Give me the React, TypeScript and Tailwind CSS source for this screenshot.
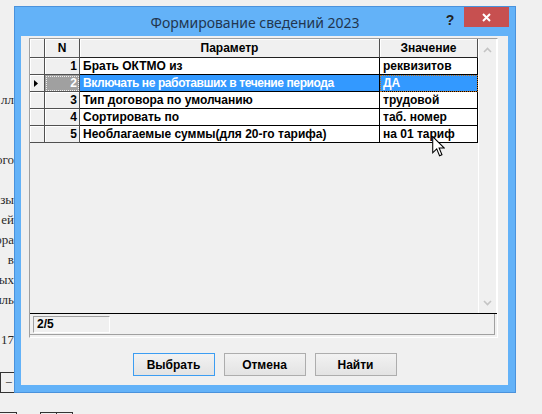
import React from "react";

const ROWS = [
  { n: 1, param: "Брать ОКТМО из", value: "реквизитов" },
  { n: 2, param: "Включать не работавших в течение периода", value: "ДА" },
  { n: 3, param: "Тип договора по умолчанию", value: "трудовой" },
  { n: 4, param: "Сортировать по", value: "таб. номер" },
  { n: 5, param: "Необлагаемые суммы(для 20-го тарифа)", value: "на 01 тариф" },
];

const SELECTED = 2;

// text fragments of the document behind the dialog, cut by the window edge
const BEHIND = ["лл", "", "", "ого", "", "азы", "ей ", "ора", "в ", "ных", "иль", "", "17"];

const fixedCell =
  "shrink-0 bg-[#f0f0f0] border-r border-b border-[#505050] shadow-[inset_1px_1px_0_#ffffff]";

function Chevron({ up }: { up?: boolean }) {
  return (
    <svg width="9" height="6" viewBox="0 0 9 6" aria-hidden="true">
      <polyline
        points={up ? "1,5 4.5,1.5 8,5" : "1,1 4.5,4.5 8,1"}
        fill="none"
        stroke="#c4c4c4"
        strokeWidth="1.6"
      />
    </svg>
  );
}

function Grid() {
  return (
    <div className="ml-[8px] mt-[2px] w-[469px] h-[300px] border-t border-l border-[#a0a0a0] border-r border-b border-r-white border-b-white flex flex-col">
      <div className="flex h-[274px]">
        <div className="w-[448px] flex flex-col">
          {/* header */}
          <div className="flex h-[19px] font-bold">
            <div className={`${fixedCell} w-[15px]`} />
            <div className={`${fixedCell} w-[35px] flex items-center justify-center`}>N</div>
            <div className={`${fixedCell} w-[300px] flex items-center justify-center border-b-[#202020]`}>
              Параметр
            </div>
            <div className={`${fixedCell} w-[98px] flex items-center justify-center border-b-[#202020]`}>
              Значение
            </div>
          </div>
          {ROWS.map((r) => {
            const sel = r.n === SELECTED;
            return (
              <div key={r.n} className="flex h-[17px] font-bold">
                <div className={`${fixedCell} w-[15px] flex items-center pl-[4px]`}>
                  {sel && (
                    <svg width="4" height="7" viewBox="0 0 4 7" aria-hidden="true">
                      <polygon points="0,0 4,3.5 0,7" fill="#000" />
                    </svg>
                  )}
                </div>
                <div
                  className={
                    sel
                      ? "shrink-0 w-[35px] bg-[#a0a0a0] text-white border-r border-b border-[#505050] outline-1 outline-dotted outline-[#f0f0f0] -outline-offset-2 flex items-center justify-end pr-[2px]"
                      : `${fixedCell} w-[35px] flex items-center justify-end pr-[2px]`
                  }
                >
                  {r.n}
                </div>
                <div
                  className={[
                    "shrink-0 w-[300px] border-r border-b border-black flex items-center pl-[3px] whitespace-nowrap",
                    sel ? "bg-[#3399ff] text-white tracking-[-0.4px]" : "bg-white text-black",
                  ].join(" ")}
                >
                  {r.param}
                </div>
                <div
                  className={[
                    "shrink-0 w-[98px] border-r border-b border-black flex items-center pl-[3px] whitespace-nowrap",
                    sel
                      ? "bg-[#3399ff] text-white outline-1 outline-dotted outline-[#c07020] -outline-offset-1"
                      : "bg-white text-black",
                  ].join(" ")}
                >
                  {r.value}
                </div>
              </div>
            );
          })}
          <div className="flex-1 bg-[#f0f0f0]" />
        </div>
        {/* scrollbar */}
        <div className="w-[19px] bg-[#f0f0f0] border-l border-r border-white flex flex-col items-center justify-between pt-[8px] pb-[7px]">
          <Chevron up />
          <Chevron />
        </div>
      </div>
      <div className="h-[1px] bg-black" />
      <div className="h-[23px]">
        <div className="w-[465px] h-[21px] border-r border-b border-[#a0a0a0] pl-[3px] pt-[2px]">
          <div className="w-[77px] h-[17px] border-t border-l border-[#a0a0a0] border-r border-b border-r-white border-b-white font-bold pl-[3px] leading-[15px]">
            2/5
          </div>
        </div>
      </div>
    </div>
  );
}

function Button({ label, primary }: { label: string; primary?: boolean }) {
  return (
    <div
      className={[
        "w-[82px] h-[23px] flex items-center justify-center font-bold bg-gradient-to-b from-[#f2f2f2] to-[#e3e3e3] border",
        primary ? "border-[#3c9df2]" : "border-[#adadad]",
      ].join(" ")}
    >
      {label}
    </div>
  );
}

function Dialog() {
  return (
    <div className="mt-[6px] w-[502px] h-[387px] border border-[#4a92dc] bg-[#63b2f8] flex flex-col">
      <div className="h-[29px] flex items-start shrink-0">
        <div
          className="flex-1 pl-[53px] pt-[5px] text-center text-[14px] text-[#22364f] whitespace-nowrap"
          style={{ fontFamily: '"Noto Sans", "Open Sans", sans-serif' }}
        >
          Формирование сведений 2023
        </div>
        <div className="w-[16px] pt-[3px] text-center text-[14px] font-bold text-[#222]">?</div>
        <div className="ml-[6px] mr-[6px] w-[45px] h-[20px] bg-[#c75050] flex items-center justify-center">
          <svg width="9" height="9" viewBox="0 0 9 9" aria-hidden="true">
            <path d="M1 1 L8 8 M8 1 L1 8" stroke="#fff" strokeWidth="2" />
          </svg>
        </div>
      </div>
      <div className="ml-[6px] mr-[7px] mb-[7px] flex-1 bg-[#f0f0f0] flex flex-col">
        <Grid />
        <div className="mt-[15px] flex justify-center gap-[9px]">
          <Button label="Выбрать" primary />
          <Button label="Отмена" />
          <Button label="Найти" />
        </div>
      </div>
    </div>
  );
}

export default function App() {
  return (
    <div
      className="relative w-[542px] h-[414px] overflow-hidden bg-[#f0f0f0] flex flex-col text-[12px] text-black"
      style={{ fontFamily: '"Liberation Sans", Arial, sans-serif' }}
    >
      <div className="flex h-[393px]">
        <div
          className="w-[14px] shrink-0 overflow-hidden flex flex-col pt-[90px] text-[13px] text-[#2a2a2a]"
          style={{ fontFamily: '"Liberation Serif", serif' }}
        >
          {BEHIND.map((t, i) => (
            <div key={i} className="h-[20px] leading-[20px] flex justify-end whitespace-nowrap">
              {t}
            </div>
          ))}
          <div className="mt-[22px] h-[21px] border-t border-l border-b border-[#333] flex items-center pl-[4px] leading-none">
            −
          </div>
        </div>
        <Dialog />
      </div>
      <div className="flex-1 flex items-end">
        <div className="w-[17px] h-[2px] border-t border-r border-[#333]" />
        <div className="ml-[23px] w-[17px] h-[2px] border-t border-l border-r border-[#333]" />
        <div className="w-[16px] h-[2px] border-t border-r border-[#333]" />
      </div>
      {/* mouse pointer */}
      <svg
        className="absolute left-[432px] top-[136px]"
        width="13"
        height="21"
        viewBox="0 0 12 20"
        aria-hidden="true"
      >
        <path d="M0.5 0.5 L0.5 16 L4.3 12.3 L7 18.8 L9.3 17.8 L6.6 11.5 L11.5 11.5 Z" fill="#fff" stroke="#000" strokeWidth="1" />
      </svg>
    </div>
  );
}
